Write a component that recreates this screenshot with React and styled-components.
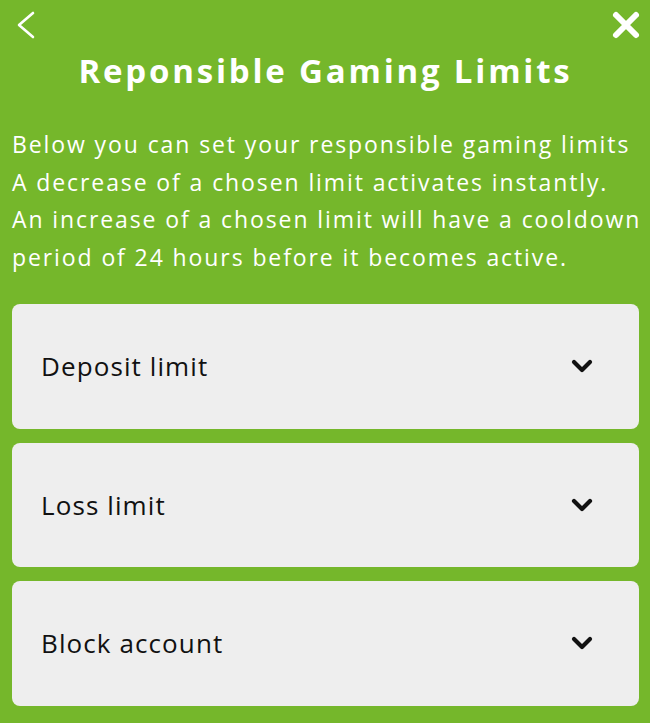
import React from 'react';
import styled, { createGlobalStyle } from 'styled-components';

const GlobalStyle = createGlobalStyle`
  html, body {
    margin: 0;
    padding: 0;
    background: #75b72b;
  }
  body {
    font-family: 'Open Sans', 'Noto Sans', sans-serif;
  }
`;

const Page = styled.div`
  min-height: 723px;
  background: #75b72b;
  padding: 0 11px 0 12px;
  box-sizing: border-box;
`;

const TopBar = styled.div`
  display: flex;
  justify-content: space-between;
  align-items: center;
  height: 50px;
  padding: 0 0 0 3px;
  margin-right: -2px;
`;

const IconButton = styled.button`
  background: none;
  border: 0;
  padding: 0;
  display: flex;
  color: #fff;
  cursor: pointer;
`;

const Title = styled.h1`
  margin: 0;
  text-align: center;
  color: #fff;
  font-size: 33px;
  font-weight: 700;
  letter-spacing: 2.8px;
  line-height: 42px;
`;

const Intro = styled.p`
  margin: 34px 0 0;
  color: #fff;
  font-size: 23px;
  letter-spacing: 1.9px;
  line-height: 37.5px;
  white-space: nowrap;
`;

const List = styled.div`
  display: flex;
  flex-direction: column;
  gap: 14px;
  margin-top: 28px;
`;

const Card = styled.button`
  display: flex;
  align-items: center;
  justify-content: space-between;
  height: 124.5px;
  width: 100%;
  border: 0;
  border-radius: 8px;
  background: #eeeeee;
  padding: 0 46px 0 29px;
  font-family: inherit;
  font-size: 26px;
  letter-spacing: 1.1px;
  color: #111;
  cursor: pointer;
  text-align: left;
`;

const Chevron = () => (
  <svg width="22" height="14" viewBox="0 0 22 14">
    <path d="M3 3 L11 11 L19 3" fill="none" stroke="#111" strokeWidth="4.2" strokeLinecap="round" strokeLinejoin="round" />
  </svg>
);

const limits = ['Deposit limit', 'Loss limit', 'Block account'];

export default function App() {
  return (
    <Page>
      <GlobalStyle />
      <TopBar>
        <IconButton aria-label="Back">
          <svg width="22" height="34" viewBox="0 0 22 34">
            <path d="M18 5 L4 17 L18 29" fill="none" stroke="#fff" strokeWidth="2.6" strokeLinecap="round" strokeLinejoin="round" />
          </svg>
        </IconButton>
        <IconButton aria-label="Close">
          <svg width="30" height="30" viewBox="0 0 30 30">
            <path d="M5 5 L25 25 M25 5 L5 25" fill="none" stroke="#fff" strokeWidth="6" strokeLinecap="round" />
          </svg>
        </IconButton>
      </TopBar>
      <Title>Reponsible Gaming Limits</Title>
      <Intro>
        Below you can set your responsible gaming limits
        <br />
        A decrease of a chosen limit activates instantly.
        <br />
        An increase of a chosen limit will have a cooldown
        <br />
        period of 24 hours before it becomes active.
      </Intro>
      <List>
        {limits.map(label => (
          <Card key={label}>
            <span>{label}</span>
            <Chevron />
          </Card>
        ))}
      </List>
    </Page>
  );
}
